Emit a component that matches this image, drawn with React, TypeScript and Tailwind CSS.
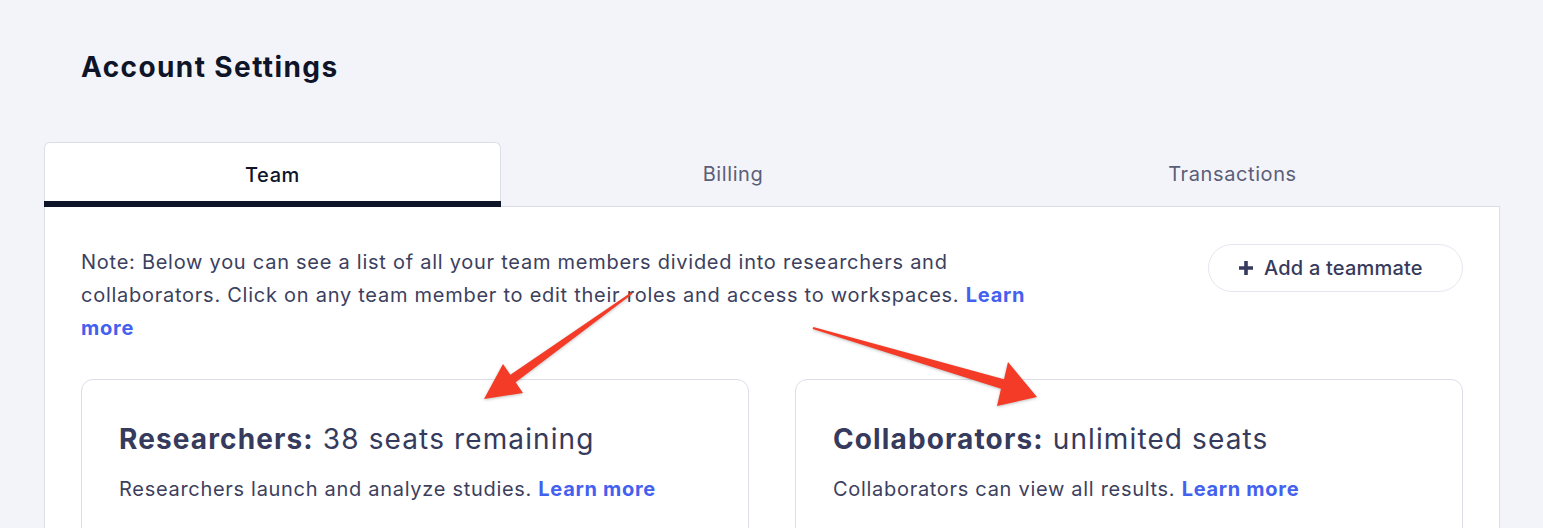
import React from 'react';

const tabs = [
  { label: 'Team', width: 'w-[457px]' },
  { label: 'Billing', width: 'w-[464px]' },
  { label: 'Transactions', width: 'flex-1' },
];

function PlusIcon() {
  return (
    <svg width="16" height="16" viewBox="0 0 16 16" aria-hidden="true">
      <path d="M8 1v14M1 8h14" stroke="currentColor" strokeWidth="3.6" />
    </svg>
  );
}

function SeatCard({
  role,
  seats,
  text,
}: {
  role: string;
  seats: string;
  text: string;
}) {
  return (
    <div className="h-[180px] rounded-xl border border-[#dcdde9] bg-white px-[37px] pt-[42px]">
      <h2 className="text-[28px] leading-[34px] tracking-[0.04em] text-[#363a5c]">
        <span className="font-bold">{role}:</span> {seats}
      </h2>
      <p className="mt-[18px] text-[20px] leading-[30px] tracking-[0.035em] text-[#3c3f5e]">
        {text}{' '}
        <a href="#" className="font-bold text-[#4361ee]">
          Learn more
        </a>
      </p>
    </div>
  );
}

// Red callout arrows drawn over the page
function Arrows() {
  return (
    <svg
      className="pointer-events-none absolute left-0 top-0 drop-shadow-[0_1px_1.5px_rgba(0,0,0,0.25)]"
      width="1543"
      height="528"
      viewBox="0 0 1543 528"
    >
      <polygon
        fill="#f43b27"
        points="632.6,293.8 515.6,382.2 523,393 484,399 503,364 510.4,374.8 631.4,292.2"
      />
      <polygon
        fill="#f43b27"
        points="812.7,329 1001,388.8 997,406 1037,397 1008,362 1004,379.2 813.3,327"
      />
    </svg>
  );
}

export default function App() {
  return (
    <div className="relative h-[528px] overflow-hidden bg-[#f3f4f9] font-['Inter',sans-serif]">
      <div className="px-[44px] pt-[50px]">
        <h1 className="pl-[37px] text-[28px] font-bold leading-[34px] tracking-[0.05em] text-[#0f1529]">
          Account Settings
        </h1>

        <div className="mt-[58px] flex w-[1456px]">
          {tabs.map((tab, i) =>
            i === 0 ? (
              <div
                key={tab.label}
                className={`${tab.width} flex h-[65px] flex-col rounded-t-md border-x border-t border-[#dcdde9] bg-white`}
              >
                <div className="flex flex-1 items-center justify-center pt-[5px] text-[20px] font-medium tracking-[0.03em] text-[#0f1529]">
                  {tab.label}
                </div>
                <div className="-mx-px h-[6px] bg-[#0f1529]" />
              </div>
            ) : (
              <div
                key={tab.label}
                className={`${tab.width} flex h-[65px] items-center justify-center border-b border-[#dcdde9] pb-[1px] text-[20px] tracking-[0.03em] text-[#5b5e78]`}
              >
                {tab.label}
              </div>
            )
          )}
        </div>

        <div className="w-[1456px] border-x border-[#dcdde9] bg-white px-[36px] pt-[39px] pb-[40px]">
          <div className="flex items-start justify-between">
            <p className="w-[950px] text-[20px] leading-[33px] tracking-[0.037em] text-[#3c3f5e]">
              Note: Below you can see a list of all your team members divided into researchers and
              collaborators. Click on any team member to edit their roles and access to workspaces.{' '}
              <a href="#" className="font-bold text-[#4361ee]">
                Learn more
              </a>
            </p>
            <button className="-mt-[2px] flex h-[48px] w-[255px] items-center gap-[10px] rounded-full border border-[#e6e6f2] bg-white pl-[29px] text-[20px] font-medium tracking-[0.01em] text-[#363a5c]">
              <PlusIcon />
              Add a teammate
            </button>
          </div>

          <div className="mt-[34px] grid grid-cols-2 gap-[46px]">
            <SeatCard
              role="Researchers"
              seats="38 seats remaining"
              text="Researchers launch and analyze studies."
            />
            <SeatCard
              role="Collaborators"
              seats="unlimited seats"
              text="Collaborators can view all results."
            />
          </div>
        </div>
      </div>
      <Arrows />
    </div>
  );
}
